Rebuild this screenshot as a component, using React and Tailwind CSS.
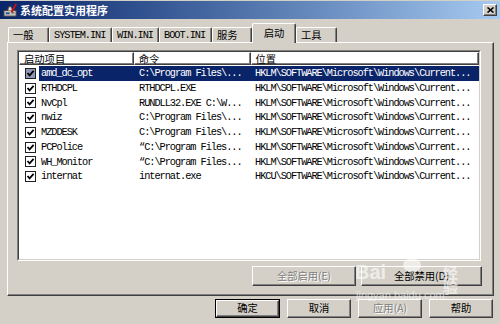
import React from 'react';

const rows = [
  ['amd_dc_opt', 'C:\\Program Files\\...', 'HKLM\\SOFTWARE\\Microsoft\\Windows\\Current...'],
  ['RTHDCPL', 'RTHDCPL.EXE', 'HKLM\\SOFTWARE\\Microsoft\\Windows\\Current...'],
  ['NvCpl', 'RUNDLL32.EXE C:\\W...', 'HKLM\\SOFTWARE\\Microsoft\\Windows\\Current...'],
  ['nwiz', 'C:\\Program Files\\...', 'HKLM\\SOFTWARE\\Microsoft\\Windows\\Current...'],
  ['MZDDESK', 'C:\\Program Files\\...', 'HKLM\\SOFTWARE\\Microsoft\\Windows\\Current...'],
  ['PCPolice', '\u201CC:\\Program Files...', 'HKLM\\SOFTWARE\\Microsoft\\Windows\\Current...'],
  ['WH_Monitor', '\u201CC:\\Program Files...', 'HKLM\\SOFTWARE\\Microsoft\\Windows\\Current...'],
  ['internat', 'internat.exe', 'HKCU\\SOFTWARE\\Microsoft\\Windows\\Current...'],
];

const mono = "font-['Liberation_Mono',monospace] text-[10.3px] tracking-[-1.05px]";
const cjk = "font-['Noto_Sans_CJK_SC',sans-serif] text-[10.3px]";

const tabs = [
  { label: '一般', w: 'w-[41px]' },
  { label: 'SYSTEM.INI', w: 'w-[63px]', latin: true },
  { label: 'WIN.INI', w: 'w-[47px]', latin: true },
  { label: 'BOOT.INI', w: 'w-[53px]', latin: true },
  { label: '服务', w: 'w-[40px]' },
  { label: '启动', w: 'w-[44px]', active: true },
  { label: '工具', w: 'w-[41px]' },
];

function TitleIcon() {
  return (
    <svg width="15" height="15" viewBox="0 0 16 16">
      <rect x="1" y="8" width="13" height="6" fill="#c8c4bc" stroke="#404040" strokeWidth="1" />
      <rect x="3" y="10" width="4" height="2" fill="#2050a0" />
      <rect x="9" y="10" width="3" height="1" fill="#404040" />
      <path d="M5 8 L6 4 L9 4 L10 8" fill="#e0dcd4" stroke="#404040" strokeWidth="1" />
      <path d="M9 10 L14 1" stroke="#d01010" strokeWidth="2" />
    </svg>
  );
}

function TitleBar() {
  return (
    <div className="h-[18px] flex items-center bg-linear-to-r from-[#0a246a] to-[#a6caf0] pl-[3px] pr-[3px]">
      <TitleIcon />
      <span className="ml-[2px] text-white font-bold text-[11px] leading-none font-['Noto_Sans_CJK_SC',sans-serif]">系统配置实用程序</span>
      <div className="ml-auto w-[14px] h-[12px] bg-[#d4d0c8] border border-t-white border-l-white border-r-[#404040] border-b-[#404040] shadow-[inset_-1px_-1px_0_#808080] flex items-center justify-center">
        <svg width="7" height="6" viewBox="0 0 7 6">
          <path d="M0.5 0.5 L6.5 5.5 M6.5 0.5 L0.5 5.5" stroke="#000" strokeWidth="1.6" />
        </svg>
      </div>
    </div>
  );
}

function Tabs() {
  return (
    <div className="mt-[4px] h-[19px] flex items-end pl-[8px]">
      {tabs.map(t => (
        <div
          key={t.label}
          className={`${t.w} bg-[#d4d0c8] border-t border-l border-r border-t-white border-l-white border-r-[#404040] rounded-t-[2px] shadow-[inset_-1px_0_0_#808080] flex items-start ${
            t.active ? 'h-[20px] relative z-10 -mb-px justify-center pt-[3px]' : 'h-[15px] pl-[4px] pt-[1px]'
          }`}
        >
          <span className={`${t.latin ? mono : cjk} leading-[12px] text-black whitespace-nowrap`}>{t.label}</span>
        </div>
      ))}
    </div>
  );
}

function Check({ sel }) {
  return (
    <div className={`w-[11px] h-[11px] border border-[#202020] flex items-center justify-center shrink-0 ${sel ? 'bg-[#8e98b8]' : 'bg-white'}`}>
      <svg width="9" height="9" viewBox="0 0 9 9">
        <polyline points="1.5,4 3.6,6.3 7.6,1.8" fill="none" stroke="#000" strokeWidth="1.8" />
      </svg>
    </div>
  );
}

function HeaderCell({ w, children }) {
  return (
    <div className={`${w} h-[13px] border-t border-l border-t-white border-l-white border-r border-b border-r-[#404040] border-b-[#404040] shadow-[inset_-1px_-1px_0_#808080] pl-[4px] flex items-center`}>
      <span className={`${cjk} leading-[11px] text-black`}>{children}</span>
    </div>
  );
}

function ListView() {
  return (
    <div className="w-[464px] h-[211px] border border-t-[#808080] border-l-[#808080] border-r-white border-b-white">
      <div className="h-full border border-t-[#404040] border-l-[#404040] border-r-[#d4d0c8] border-b-[#d4d0c8] bg-white overflow-hidden">
        <div className="flex">
          <HeaderCell w="w-[115px]">启动项目</HeaderCell>
          <HeaderCell w="w-[117px]">命令</HeaderCell>
          <HeaderCell w="w-[229px]">位置</HeaderCell>
        </div>
        <div className="pt-[1px]">
          {rows.map((r, i) => {
            const sel = i === 0;
            const hl = sel ? 'bg-[#0a246a] text-white' : 'text-black';
            return (
              <div key={r[0]} className="flex h-[14.75px]">
                <div className="w-[115px] flex items-center pl-[6px]">
                  <Check sel={sel} />
                  <div className={`ml-[3px] flex-1 h-full flex items-center pl-[2px] ${hl}`}>
                    <span className={`${mono} leading-none whitespace-nowrap`}>{r[0]}</span>
                  </div>
                </div>
                <div className={`w-[117px] flex items-center pl-[5px] ${hl}`}>
                  <span className={`${mono} leading-none whitespace-nowrap`}>{r[1]}</span>
                </div>
                <div className={`w-[228px] flex items-center pl-[4px] ${hl}`}>
                  <span className={`${mono} leading-none whitespace-nowrap`}>{r[2]}</span>
                </div>
              </div>
            );
          })}
        </div>
      </div>
    </div>
  );
}

function Button({ w, h = 'h-[20px]', disabled, children }) {
  return (
    <div className={`${w} ${h} bg-[#d4d0c8] border border-t-white border-l-white border-r-[#404040] border-b-[#404040] shadow-[inset_-1px_-1px_0_#808080] flex items-center justify-center`}>
      <span className={`${cjk} leading-none ${disabled ? 'text-[#808080] [text-shadow:1px_1px_0_#fff]' : 'text-black'}`}>{children}</span>
    </div>
  );
}

function Panel() {
  return (
    <div className="ml-[7px] w-[487px] h-[254px] border-t border-l border-t-white border-l-white border-r border-b border-r-[#404040] border-b-[#404040] shadow-[inset_-1px_-1px_0_#808080] pt-[7px] pl-[9px]">
      <ListView />
      <div className="mt-[5px] flex pl-[235px] gap-[5px]">
        <Button w="w-[104px]" disabled>全部启用(E)</Button>
        <Button w="w-[121px]">全部禁用(D)</Button>
      </div>
    </div>
  );
}

function BottomButtons() {
  return (
    <div className="mt-[3px] flex pl-[215px] gap-[7px]">
      <div className="w-[65px] h-[19px] border border-black">
        <Button w="w-full" h="h-full">确定</Button>
      </div>
      <Button w="w-[64px]" h="h-[19px]">取消</Button>
      <Button w="w-[64px]" h="h-[19px]" disabled>应用(A)</Button>
      <Button w="w-[64px]" h="h-[19px]">帮助</Button>
    </div>
  );
}

function Watermark() {
  return (
    <div className="absolute left-[355px] top-[246px] w-[115px] h-[56px] pointer-events-none opacity-60">
      <svg className="absolute left-[38px] top-[1px]" width="38" height="26" viewBox="0 0 38 26">
        <ellipse cx="9" cy="7" rx="4" ry="5" fill="#fff" />
        <ellipse cx="19" cy="4" rx="4" ry="4.5" fill="#fff" />
        <ellipse cx="29" cy="7" rx="4" ry="5" fill="#fff" />
        <ellipse cx="19" cy="18" rx="9" ry="7" fill="#fff" />
      </svg>
      <span className="absolute left-0 top-[16px] text-white font-bold text-[20px] leading-none font-['Liberation_Sans',sans-serif]">Bai</span>
      <span className="absolute left-[88px] top-[18px] text-white font-bold text-[15px] leading-none font-['Noto_Sans_CJK_SC',sans-serif]">经验</span>
      <span className="absolute left-[1px] top-[44px] text-white text-[11px] leading-none font-['Liberation_Sans',sans-serif]">jingyan.baidu.com</span>
    </div>
  );
}

export default function App() {
  return (
    <div className="relative w-[500px] h-[324px] overflow-hidden bg-[#d4d0c8] select-none">
      <div className="pt-px">
        <TitleBar />
      </div>
      <Tabs />
      <Panel />
      <BottomButtons />
      <Watermark />
    </div>
  );
}
